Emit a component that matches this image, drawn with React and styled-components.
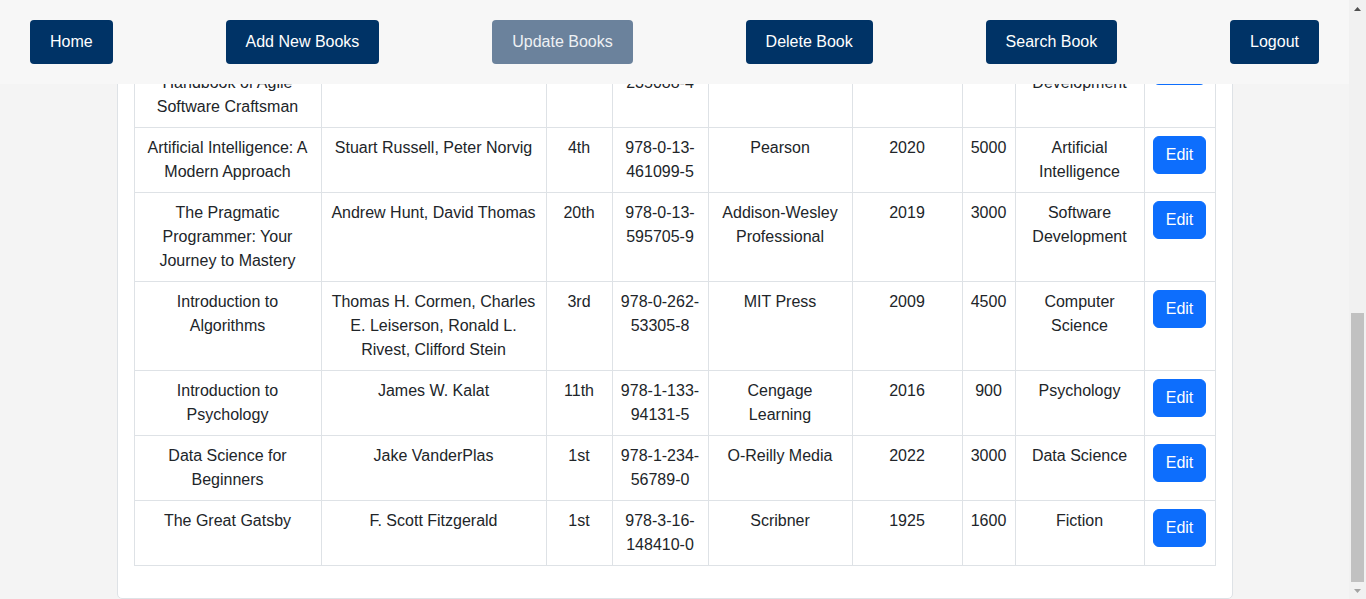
import React, { useLayoutEffect, useState } from 'react';
import styled, { createGlobalStyle } from 'styled-components';

const GlobalStyle = createGlobalStyle`
  html { scroll-behavior: auto; }
  body {
    margin: 0;
    padding-right: 17px;
    background: #f4f4f4;
    font-family: "Liberation Sans", Arial, sans-serif;
    color: #212529;
  }
  * { box-sizing: border-box; }
`;

const NavBar = styled.nav`
  position: fixed;
  top: 0;
  left: 0;
  right: 17px;
  z-index: 10;
  height: 84px;
  padding: 20px 30px;
  background: #f7f7f7;
  display: flex;
  justify-content: space-between;
  align-items: flex-start;
`;

const NavButton = styled.button`
  font-family: inherit;
  font-size: 16px;
  line-height: 20px;
  padding: 12px 20px;
  border: none;
  border-radius: 4px;
  color: ${p => (p.$active ? '#eef1f4' : '#fff')};
  background: ${p => (p.$active ? '#6b829c' : '#003366')};
  cursor: pointer;
`;

/* stand-in for the window scrollbar the browser draws in the reference */
const ScrollTrack = styled.div`
  position: fixed;
  top: 0;
  right: 0;
  bottom: 0;
  width: 17px;
  z-index: 20;
  background: #f1f1f1;
  display: flex;
  flex-direction: column;
  justify-content: space-between;
  align-items: center;
`;

const Arrow = styled.div`
  width: 17px;
  height: 17px;
  display: flex;
  align-items: center;
  justify-content: center;
  svg { display: block; }
`;

const Thumb = styled.div`
  position: absolute;
  left: 2px;
  right: 2px;
  background: #c1c1c1;
`;

const Main = styled.main`
  padding-top: 104px;
`;

const Container = styled.div`
  max-width: 1140px;
  margin: 0 auto;
  padding: 0 12px;
`;

const Card = styled.section`
  background: #fff;
  border: 1px solid #dee2e6;
  border-radius: 5px;
  padding: 16px;
`;

const Heading = styled.h2`
  margin: 0 0 16px;
  font-size: 28px;
  font-weight: 500;
  line-height: 1.2;
`;

const Table = styled.table`
  width: 100%;
  table-layout: fixed;
  border-collapse: collapse;
  margin-bottom: 16px;
  font-size: 16px;
  line-height: 24px;
  color: #212529;

  th, td {
    border: 1px solid #dee2e6;
    padding: 8px;
    text-align: center;
    vertical-align: top;
  }
  th { font-weight: 700; }
`;

const EditButton = styled.button`
  font-family: inherit;
  font-size: 16px;
  line-height: 24px;
  padding: 6px 12px;
  border: 1px solid #0d6efd;
  border-radius: 6px;
  background: #0d6efd;
  color: #fff;
  cursor: pointer;
`;

const navItems = ['Home', 'Add New Books', 'Update Books', 'Delete Book', 'Search Book', 'Logout'];

const colWidths = [187, 225, 66, 96, 144, 110, 53, 129, 71];

const books = [
  ['Design Patterns: Elements of Reusable Object-Oriented Software', 'Erich Gamma, Richard Helm, Ralph Johnson, John Vlissides', '1st', '978-0-201-63361-0', 'Addison-Wesley Professional', '1994', '395', 'Software Development'],
  ['Structure and Interpretation of Computer Programs', 'Harold Abelson, Gerald Jay Sussman', '2nd', '978-0-262-51087-5', 'MIT Press', '1996', '657', 'Computer Science'],
  ['JavaScript: The Good Parts', 'Douglas Crockford', '1st', '978-0-596-51774-8', "O'Reilly Media", '2008', '176', 'Programming'],
  ['Eloquent JavaScript', 'Marijn Haverbeke', '3rd', '978-1-593-27950-9', 'No Starch Press', '2018', '472', 'Programming'],
  ['Refactoring: Improving the Design of Existing Code', 'Martin Fowler', '2nd', '978-0-13-475759-9', 'Addison-Wesley Professional', '2018', '448', 'Software Development'],
  ['Sapiens: A Brief History of Humankind', 'Yuval Noah Harari', '1st', '978-0-06-231609-7', 'Harper', '2015', '443', 'History'],
  ['Clean Code: A Handbook of Agile Software Craftsman', 'Robert C. Martin', '1st', '978-0-13-235088-4', 'Prentice Hall', '2008', '464', 'Software Development'],
  ['Artificial Intelligence: A Modern Approach', 'Stuart Russell, Peter Norvig', '4th', '978-0-13-461099-5', 'Pearson', '2020', '5000', 'Artificial Intelligence'],
  ['The Pragmatic Programmer: Your Journey to Mastery', 'Andrew Hunt, David Thomas', '20th', '978-0-13-595705-9', 'Addison-Wesley Professional', '2019', '3000', 'Software Development'],
  ['Introduction to Algorithms', 'Thomas H. Cormen, Charles E. Leiserson, Ronald L. Rivest, Clifford Stein', '3rd', '978-0-262-53305-8', 'MIT Press', '2009', '4500', 'Computer Science'],
  ['Introduction to Psychology', 'James W. Kalat', '11th', '978-1-133-94131-5', 'Cengage Learning', '2016', '900', 'Psychology'],
  ['Data Science for Beginners', 'Jake VanderPlas', '1st', '978-1-234-56789-0', "O-Reilly Media", '2022', '3000', 'Data Science'],
  ['The Great Gatsby', 'F. Scott Fitzgerald', '1st', '978-3-16-148410-0', 'Scribner', '1925', '1600', 'Fiction'],
];

const App = () => {
  const [bar, setBar] = useState({ top: 17, height: 0 });

  // page is shown scrolled to the end of the list
  useLayoutEffect(() => {
    const doc = document.documentElement;
    window.scrollTo(0, doc.scrollHeight);
    const track = window.innerHeight - 34;
    const total = doc.scrollHeight;
    setBar({
      top: 17 + Math.round(track * window.scrollY / total),
      height: Math.round(track * window.innerHeight / total),
    });
  }, []);

  return (
    <>
      <GlobalStyle />
      <NavBar>
        {navItems.map(n => (
          <NavButton key={n} $active={n === 'Update Books'}>{n}</NavButton>
        ))}
      </NavBar>
      <ScrollTrack>
        <Arrow>
          <svg width="7" height="4" viewBox="0 0 7 4"><path d="M0 4 L3.5 0 L7 4 Z" fill="#505050" /></svg>
        </Arrow>
        <Thumb style={{ top: bar.top, height: bar.height }} />
        <Arrow>
          <svg width="7" height="4" viewBox="0 0 7 4"><path d="M0 0 L7 0 L3.5 4 Z" fill="#a3a3a3" /></svg>
        </Arrow>
      </ScrollTrack>
      <Main>
        <Container>
          <Card>
            <Heading>Update Books</Heading>
            <Table>
              <colgroup>
                {colWidths.map((w, i) => <col key={i} style={{ width: w }} />)}
              </colgroup>
              <thead>
                <tr>
                  <th>Title</th>
                  <th>Author</th>
                  <th>Edition</th>
                  <th>ISBN</th>
                  <th>Publisher</th>
                  <th>Year</th>
                  <th>Pages</th>
                  <th>Category</th>
                  <th>Action</th>
                </tr>
              </thead>
              <tbody>
                {books.map((b, i) => (
                  <tr key={i}>
                    {b.map((c, j) => <td key={j}>{c}</td>)}
                    <td><EditButton>Edit</EditButton></td>
                  </tr>
                ))}
              </tbody>
            </Table>
          </Card>
        </Container>
      </Main>
    </>
  );
};

export default App;
